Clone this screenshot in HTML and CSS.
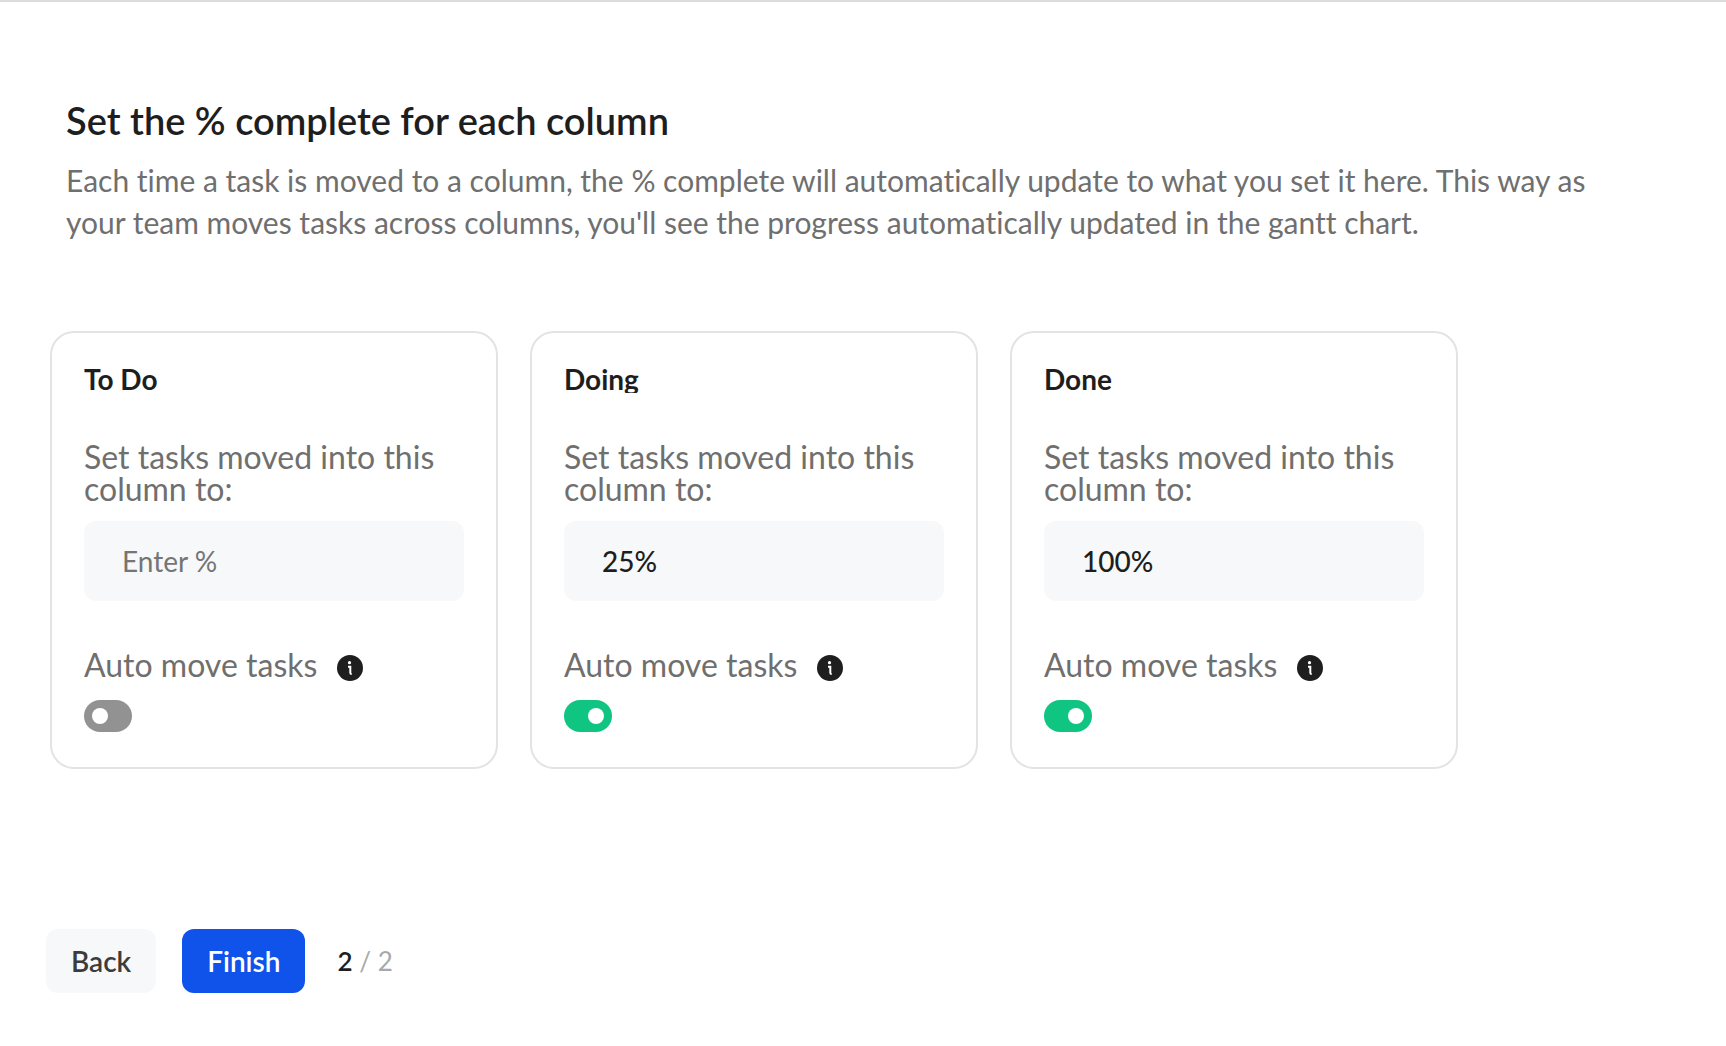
FILE: index.html
```html
<!DOCTYPE html>
<html lang="en">
<head>
    <meta charset="UTF-8">
    <meta name="viewport" content="width=device-width, initial-scale=1.0">
    <title>Set the % complete</title>
    <link rel="stylesheet" href="styles.css">
</head>
<body>
    <main class="wizard">
        <header class="intro">
            <h1>Set the % complete for each column</h1>
            <p>Each time a task is moved to a column, the % complete will automatically update to what you set it here. This way as your team moves tasks across columns, you'll see the progress automatically updated in the gantt chart.</p>
        </header>

        <form id="columns" class="columns">
            <section class="card">
                <h2>To Do</h2>
                <label class="label" for="todo-percent">Set tasks moved into this column to:</label>
                <input class="percent" id="todo-percent" type="text" placeholder="Enter %">
                <div class="auto-move">
                    <label class="label" for="todo-auto">Auto move tasks</label>
                    <button class="info" type="button" aria-label="About auto move">
                        <svg viewBox="0 0 26 26"><circle cx="13" cy="13" r="13"/><circle class="mark" cx="12.5" cy="7.7" r="1.6"/><path d="M11 11.8h2.3v5.9q0 1.4 1.4 1.4"/></svg>
                    </button>
                </div>
                <input class="toggle" id="todo-auto" type="checkbox">
            </section>

            <section class="card">
                <h2>Doing</h2>
                <label class="label" for="doing-percent">Set tasks moved into this column to:</label>
                <input class="percent" id="doing-percent" type="text" placeholder="Enter %" value="25%">
                <div class="auto-move">
                    <label class="label" for="doing-auto">Auto move tasks</label>
                    <button class="info" type="button" aria-label="About auto move">
                        <svg viewBox="0 0 26 26"><circle cx="13" cy="13" r="13"/><circle class="mark" cx="12.5" cy="7.7" r="1.6"/><path d="M11 11.8h2.3v5.9q0 1.4 1.4 1.4"/></svg>
                    </button>
                </div>
                <input class="toggle" id="doing-auto" type="checkbox" checked>
            </section>

            <section class="card">
                <h2>Done</h2>
                <label class="label" for="done-percent">Set tasks moved into this column to:</label>
                <input class="percent" id="done-percent" type="text" placeholder="Enter %" value="100%">
                <div class="auto-move">
                    <label class="label" for="done-auto">Auto move tasks</label>
                    <button class="info" type="button" aria-label="About auto move">
                        <svg viewBox="0 0 26 26"><circle cx="13" cy="13" r="13"/><circle class="mark" cx="12.5" cy="7.7" r="1.6"/><path d="M11 11.8h2.3v5.9q0 1.4 1.4 1.4"/></svg>
                    </button>
                </div>
                <input class="toggle" id="done-auto" type="checkbox" checked>
            </section>
        </form>

        <footer class="actions">
            <button class="button" type="button">Back</button>
            <button class="button primary" type="submit" form="columns">Finish</button>
            <span class="steps"><strong>2</strong> / 2</span>
        </footer>
    </main>
</body>
</html>
```
FILE: styles.css
```css
* {
    margin: 0;
    padding: 0;
    box-sizing: border-box;
}

body {
    background-color: #fff;
    border-top: 2px solid #dcdcdc;
    color: #1e1e1e;
    font-family: Lato, "Open Sans", sans-serif;
    font-variant-ligatures: no-common-ligatures;
}

button,
input {
    font-family: inherit;
    border: none;
}

.wizard {
    padding: 96px 46px 48px;
}

.intro {
    padding: 0 80px 0 20px;
}

.intro h1 {
    font-size: 38px;
    line-height: 44px;
    font-weight: 600;
    margin-bottom: 17px;
}

.intro p {
    color: #6f6f6f;
    font-size: 30px;
    line-height: 42px;
}

/* Board columns */
.columns {
    display: flex;
    flex-wrap: wrap;
    gap: 32px;
    margin: 88px 4px 0;
}

.card {
    width: 448px;
    border: 2px solid #e3e3e3;
    border-radius: 24px;
    padding: 32px 32px 35px;
    display: flex;
    flex-direction: column;
    align-items: flex-start;
}

.card h2 {
    font-size: 28px;
    line-height: 28px;
    font-weight: 700;
    margin-bottom: 48px;
    overflow: hidden;
}

.label {
    color: #6f6f6f;
    font-size: 32px;
    line-height: 32px;
}

.percent {
    background-color: #f7f8fa;
    border-radius: 12px;
    color: #1e1e1e;
    font-size: 28px;
    font-weight: 500;
    width: 100%;
    height: 80px;
    padding: 0 38px;
    margin: 16px 0 48px;
}

.percent::placeholder {
    color: #757575;
    font-weight: 400;
}

.auto-move {
    display: flex;
    align-items: flex-end;
    gap: 20px;
    margin-bottom: 19px;
}

.info {
    background: none;
    width: 26px;
    height: 26px;
    cursor: pointer;
}

.info svg {
    display: block;
    fill: #1e1e1e;
}

.info .mark {
    fill: #fff;
}

.info path {
    fill: none;
    stroke: #fff;
    stroke-width: 2;
}

.toggle {
    appearance: none;
    background-color: #929292;
    border-radius: 16px;
    width: 48px;
    height: 32px;
    padding: 8px;
    display: flex;
    cursor: pointer;
}

.toggle::before {
    content: "";
    background-color: #fff;
    border-radius: 50%;
    width: 16px;
    height: 16px;
}

.toggle:checked {
    background-color: #10c581;
    justify-content: flex-end;
}

/* Footer */
.actions {
    display: flex;
    align-items: center;
    margin-top: 160px;
}

.button {
    background-color: #f7f8fa;
    border-radius: 12px;
    color: #3b3d3c;
    font-size: 28px;
    font-weight: 600;
    height: 64px;
    padding: 0 25px;
    margin-right: 26px;
    cursor: pointer;
}

.primary {
    background-color: #1053ea;
    color: #fff;
    margin-right: 32px;
}

.steps {
    color: #a8a8a8;
    font-size: 26px;
}

.steps strong {
    color: #1e1e1e;
    font-weight: 600;
}
```
